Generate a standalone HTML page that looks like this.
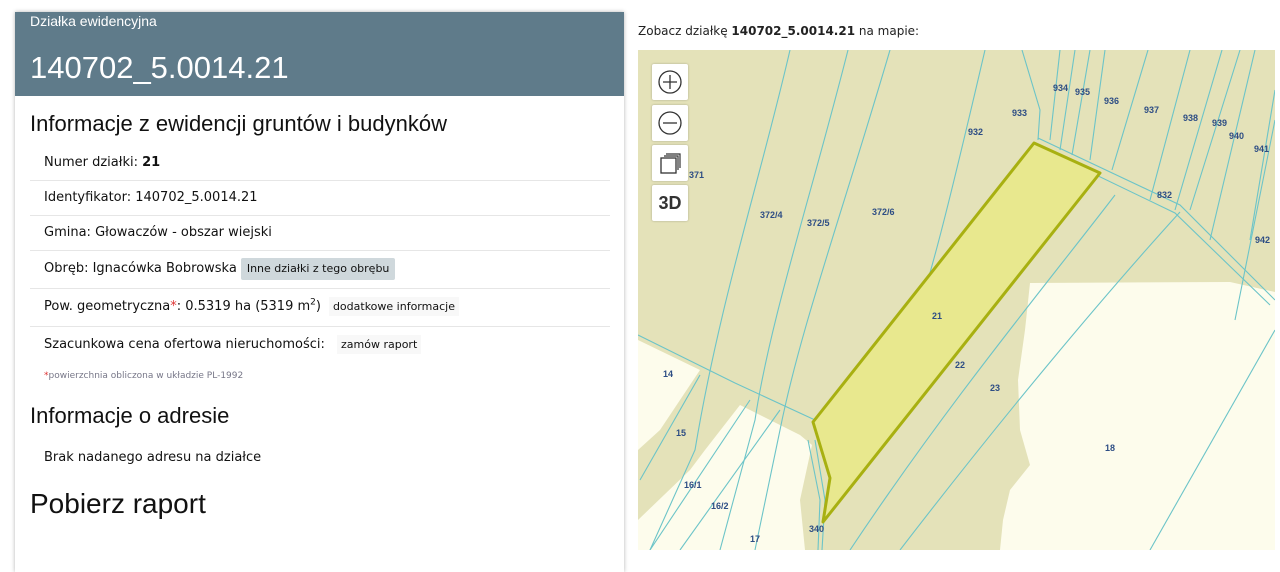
<!DOCTYPE html>
<html><head><meta charset="utf-8"><style>
body{margin:0;width:1280px;height:550px;overflow:hidden;background:#fff;font-family:"DejaVu Sans",Verdana,sans-serif;position:relative}
.panel{position:absolute;left:15px;top:12px;width:609px;height:560px;background:#fff;box-shadow:0 0 4px rgba(0,0,0,.3)}
.hdr{background:#5f7b8a;height:84px;color:#fff;font-family:"Liberation Sans",sans-serif}
.hdr .s{position:absolute;left:15px;top:1px;font-size:14px}
.hdr .b{position:absolute;left:15px;top:38px;font-size:31px;font-weight:300}
h2{position:absolute;left:15px;margin:0;font-family:"Liberation Sans",sans-serif;font-weight:normal;color:#111}
.row{position:absolute;left:15px;width:580px;font-size:13px;color:#111;padding-left:14px;box-sizing:border-box;border-bottom:1px solid #e6e6e6}
.btn{display:inline-block;background:#cfd8dc;font-size:11px;line-height:14px;padding:4px 6px;border-radius:2px;margin-left:4px;vertical-align:middle}
.lnk{font-size:11px;margin-left:8px;background:#f8f8f8;padding:3px 4px}
.map{position:absolute;left:638px;top:50px;width:637px;height:500px;overflow:hidden}
.ctl{position:absolute;left:14px;width:36px;height:36px;background:#fff;border-radius:2px;box-shadow:0 0 2px rgba(0,0,0,.25);display:flex;align-items:center;justify-content:center;font-family:"Liberation Sans",sans-serif;font-size:18px;color:#333}
svg text{font-family:"Liberation Sans",sans-serif;font-size:9px;font-weight:bold;fill:#2d4d84}
</style></head><body>
<div class="panel">
 <div class="hdr"><div class="s">Działka ewidencyjna</div><div class="b">140702_5.0014.21</div></div>
 <h2 style="top:99px;font-size:22px">Informacje z ewidencji gruntów i budynków</h2>
 <div class="row" style="top:136px;height:33px;line-height:30px">Numer działki: <b>21</b></div>
 <div class="row" style="top:169px;height:35px;line-height:34px">Identyfikator: 140702_5.0014.21</div>
 <div class="row" style="top:204px;height:35px;line-height:34px">Gmina: Głowaczów - obszar wiejski</div>
 <div class="row" style="top:239px;height:38px;line-height:36px">Obręb: Ignacówka Bobrowska<span class="btn">Inne działki z tego obrębu</span></div>
 <div class="row" style="top:277px;height:38px;line-height:36px">Pow. geometryczna<span style="color:#d33">*</span>: 0.5319 ha (5319 m<sup style="font-size:9px;line-height:0">2</sup>)<span class="lnk">dodatkowe informacje</span></div>
 <div class="row" style="top:315px;height:38px;line-height:36px;border:none">Szacunkowa cena ofertowa nieruchomości: <span class="lnk">zamów raport</span></div>
 <div style="position:absolute;left:29px;top:359px;font-size:9px;color:#778"><span style="color:#d33">*</span>powierzchnia obliczona w układzie PL-1992</div>
 <h2 style="top:391px;font-size:22px">Informacje o adresie</h2>
 <div class="row" style="top:432px;height:30px;line-height:28px;border:none">Brak nadanego adresu na działce</div>
 <h2 style="top:476px;font-size:28px">Pobierz raport</h2>
</div>
<div style="position:absolute;left:638px;top:24px;font-size:12px;color:#222">Zobacz działkę <b>140702_5.0014.21</b> na mapie:</div>
<div class="map">
<svg width="637" height="500" viewBox="638 50 637 500" style="position:absolute;left:0;top:0">
<rect x="638" y="50" width="637" height="500" fill="#e4e2b9"/>
<path d="M1030 283 L1230 282 L1275 292 L1275 550 L1000 550 L1003 520 L1010 490 L1030 465 L1020 430 L1018 380 L1025 330 Z" fill="#fdfcec"/>
<path d="M638 340 L700 370 L660 430 L638 450 Z" fill="#fdfcec"/>
<path d="M740 405 L800 435 L812 445 L800 500 L805 550 L638 550 L638 520 L690 470 L705 450 Z" fill="#fdfcec"/>
<g stroke="#6cc4c8" stroke-width="1.1" fill="none">
<path d="M790 50 C760 180 720 300 695 450 L650 550"/>
<path d="M848 50 C810 200 770 320 755 420 L720 550"/>
<path d="M890 50 C840 220 800 330 780 430 L755 550"/>
<path d="M985 50 C950 200 930 280 915 320"/>
<path d="M1022 50 L1040 110 L1038 140"/>
<path d="M1060 50 L1050 140"/>
<path d="M1075 50 L1060 150"/>
<path d="M1090 50 L1072 155"/>
<path d="M1105 50 L1090 160"/>
<path d="M1148 50 L1112 170"/>
<path d="M1190 50 L1150 200"/>
<path d="M1222 50 L1175 210"/>
<path d="M1240 50 L1190 210"/>
<path d="M1255 50 L1210 240"/>
<path d="M1275 90 L1250 240"/>
<path d="M1275 120 L1235 320"/>
<path d="M1038 138 L1180 205 L1275 300"/>
<path d="M1036 146 L1175 213 L1270 305"/>
<path d="M638 335 L735 383 L815 420"/>
<path d="M700 375 L640 480"/>
<path d="M750 400 L650 550"/>
<path d="M780 410 L680 550"/>
<path d="M808 440 L820 500 L818 550"/>
<path d="M815 440 L825 500 L822 550"/>
<path d="M1115 195 C1050 280 950 400 850 550"/>
<path d="M1180 212 C1100 300 1000 420 900 550"/>
<path d="M1275 330 L1150 550"/>
</g>
<path d="M1034 143 L1100 173 L823 522 L830 478 L813 422 Z" fill="#e8e88e" stroke="#a8b011" stroke-width="3" stroke-linejoin="round"/>
<text x="689" y="178">371</text><text x="760" y="218">372/4</text><text x="807" y="226">372/5</text><text x="872" y="215">372/6</text>
<text x="968" y="135">932</text><text x="1012" y="116">933</text><text x="1053" y="91">934</text><text x="1075" y="95">935</text><text x="1104" y="104">936</text><text x="1144" y="113">937</text><text x="1183" y="121">938</text><text x="1212" y="126">939</text><text x="1229" y="139">940</text><text x="1254" y="152">941</text><text x="1157" y="198">832</text><text x="1255" y="243">942</text>
<text x="932" y="319">21</text><text x="955" y="368">22</text><text x="990" y="391">23</text><text x="1105" y="451">18</text>
<text x="663" y="377">14</text><text x="676" y="436">15</text><text x="684" y="488">16/1</text><text x="711" y="509">16/2</text><text x="750" y="542">17</text><text x="809" y="532">340</text>
</svg>
<div class="ctl" style="top:14px"><svg width="26" height="26"><circle cx="13" cy="13" r="11" fill="none" stroke="#333" stroke-width="1.3"/><path d="M13 6V20M6 13H20" stroke="#333" stroke-width="1.3"/></svg></div>
<div class="ctl" style="top:55px"><svg width="26" height="26"><circle cx="13" cy="13" r="11" fill="none" stroke="#333" stroke-width="1.3"/><path d="M6 13H20" stroke="#333" stroke-width="1.3"/></svg></div>
<div class="ctl" style="top:95px"><svg width="26" height="26"><path d="M9 4H23V18M7 6H21V20" fill="none" stroke="#333" stroke-width="1.2"/><rect x="4" y="8" width="15" height="15" fill="#fff" stroke="#333" stroke-width="1.3"/></svg></div>
<div class="ctl" style="top:135px;font-weight:bold">3D</div>
</div>
</body></html>
